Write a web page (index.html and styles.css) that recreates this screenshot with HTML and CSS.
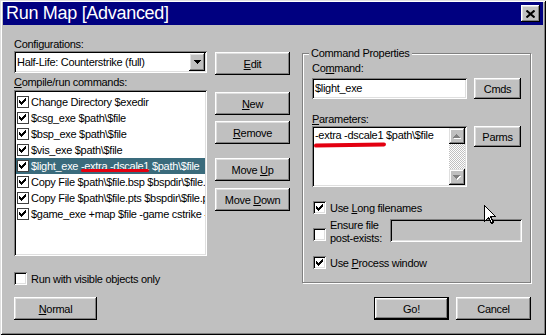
FILE: index.html
```html
<!DOCTYPE html>
<html>
<head>
  <meta charset="utf-8">
  <title>Run Map [Advanced]</title>
  <link rel="stylesheet" href="styles.css">
</head>
<body>
  <div class="window">
    <div class="titlebar">
      <span class="title">Run Map [Advanced]</span>
      <span class="close">
        <svg width="9" height="8" viewBox="0 0 9 8"><path d="M0.5 0.5L8.5 7.5M8.5 0.5L0.5 7.5" stroke="#000" stroke-width="2"/></svg>
      </span>
    </div>

    <div class="main">
      <div class="left">
        <div class="label">Configurations:</div>
        <div class="combo">
          <span class="combo-text">Half-Life: Counterstrike (full)</span>
          <span class="combo-btn">
            <svg width="7" height="4" viewBox="0 0 7 4" shape-rendering="crispEdges"><path d="M0 0H7V1H6V2H5V3H4V4H3V3H2V2H1V1H0Z" fill="#000"/></svg>
          </span>
        </div>
        <div class="label label-list"><u>C</u>ompile/run commands:</div>
        <div class="list">
          <div class="item"><span class="lcheck"><svg width="13" height="13" viewBox="0 0 13 13" shape-rendering="crispEdges"><path d="M3 5H4V6H5V7H6V6H7V5H8V4H9V3H10V6H9V7H8V8H7V9H6V10H5V9H4V8H3Z"/></svg></span><span>Change Directory $exedir</span></div>
          <div class="item"><span class="lcheck"><svg width="13" height="13" viewBox="0 0 13 13" shape-rendering="crispEdges"><path d="M3 5H4V6H5V7H6V6H7V5H8V4H9V3H10V6H9V7H8V8H7V9H6V10H5V9H4V8H3Z"/></svg></span><span>$csg_exe $path\$file</span></div>
          <div class="item"><span class="lcheck"><svg width="13" height="13" viewBox="0 0 13 13" shape-rendering="crispEdges"><path d="M3 5H4V6H5V7H6V6H7V5H8V4H9V3H10V6H9V7H8V8H7V9H6V10H5V9H4V8H3Z"/></svg></span><span>$bsp_exe $path\$file</span></div>
          <div class="item"><span class="lcheck"><svg width="13" height="13" viewBox="0 0 13 13" shape-rendering="crispEdges"><path d="M3 5H4V6H5V7H6V6H7V5H8V4H9V3H10V6H9V7H8V8H7V9H6V10H5V9H4V8H3Z"/></svg></span><span>$vis_exe $path\$file</span></div>
          <div class="item sel"><span class="lcheck"><svg width="13" height="13" viewBox="0 0 13 13" shape-rendering="crispEdges"><path d="M3 5H4V6H5V7H6V6H7V5H8V4H9V3H10V6H9V7H8V8H7V9H6V10H5V9H4V8H3Z"/></svg></span><span>$light_exe <span class="mark">-extra -dscale1</span> $path\$file</span></div>
          <div class="item"><span class="lcheck"><svg width="13" height="13" viewBox="0 0 13 13" shape-rendering="crispEdges"><path d="M3 5H4V6H5V7H6V6H7V5H8V4H9V3H10V6H9V7H8V8H7V9H6V10H5V9H4V8H3Z"/></svg></span><span>Copy File $path\$file.bsp $bspdir\$file.bsp</span></div>
          <div class="item"><span class="lcheck"><svg width="13" height="13" viewBox="0 0 13 13" shape-rendering="crispEdges"><path d="M3 5H4V6H5V7H6V6H7V5H8V4H9V3H10V6H9V7H8V8H7V9H6V10H5V9H4V8H3Z"/></svg></span><span>Copy File $path\$file.pts $bspdir\$file.pts</span></div>
          <div class="item"><span class="lcheck"><svg width="13" height="13" viewBox="0 0 13 13" shape-rendering="crispEdges"><path d="M3 5H4V6H5V7H6V6H7V5H8V4H9V3H10V6H9V7H8V8H7V9H6V10H5V9H4V8H3Z"/></svg></span><span>$game_exe +map $file -game cstrike -dev</span></div>
        </div>
        <div class="check-row visible-only"><span class="check"></span><span>Run with visible objects only</span></div>
      </div>

      <div class="buttons">
        <div class="btn btn-edit"><span><u>E</u>dit</span></div>
        <div class="btn btn-new"><span><u>N</u>ew</span></div>
        <div class="btn btn-remove"><span><u>R</u>emove</span></div>
        <div class="btn btn-up"><span>Move <u>U</u>p</span></div>
        <div class="btn btn-down"><span>Move <u>D</u>own</span></div>
      </div>

      <div class="group">
        <div class="group-title">Command Properties</div>
        <div class="label cmd-label">Co<u>m</u>mand:</div>
        <div class="field-row">
          <div class="input">$light_exe</div>
          <div class="btn btn-small">Cmds</div>
        </div>
        <div class="label params-label"><u>P</u>arameters:</div>
        <div class="field-row params-row">
          <div class="textarea">
            <div class="textarea-text"><span class="mark mark-params">-extra -dscale1</span> $path\$file</div>
            <div class="sb">
              <div class="sb-btn">
                <svg width="8" height="5" viewBox="0 0 8 5" shape-rendering="crispEdges"><path d="M4 1H5V2H6V3H7V4H8V5H1V4H4Z" fill="#fff"/><path d="M3 0H4V1H5V2H6V3H7V4H0V3H1V2H2V1H3Z" fill="#808080"/></svg>
              </div>
              <div class="sb-track"></div>
              <div class="sb-btn">
                <svg width="8" height="5" viewBox="0 0 8 5" shape-rendering="crispEdges"><path d="M1 1H8V2H7V3H6V4H5V5H4V4H3Z" fill="#fff"/><path d="M0 0H7V1H6V2H5V3H4V4H3V3H2V2H1V1H0Z" fill="#808080"/></svg>
              </div>
            </div>
          </div>
          <div class="btn btn-small">Parms</div>
        </div>
        <div class="check-row long-names">
          <span class="check"><svg width="13" height="13" viewBox="0 0 13 13" shape-rendering="crispEdges"><path d="M3 5H4V6H5V7H6V6H7V5H8V4H9V3H10V6H9V7H8V8H7V9H6V10H5V9H4V8H3Z"/></svg></span>
          <span>Use <u>L</u>ong filenames</span>
        </div>
        <div class="ensure-row">
          <span class="check"></span>
          <div class="ensure-text">Ensure file<br>post-exists:</div>
          <div class="disabled-box"></div>
        </div>
        <div class="check-row process">
          <span class="check"><svg width="13" height="13" viewBox="0 0 13 13" shape-rendering="crispEdges"><path d="M3 5H4V6H5V7H6V6H7V5H8V4H9V3H10V6H9V7H8V8H7V9H6V10H5V9H4V8H3Z"/></svg></span>
          <span>Use <u>P</u>rocess window</span>
        </div>
        <svg class="cursor" width="13" height="20" viewBox="0 0 13 20" shape-rendering="crispEdges"><path d="M0.5 0.5V16.5L4.5 12.5L7.5 18.5L9.5 17.5L6.5 11.5H11.5Z" fill="#fff" stroke="#000"/></svg>
      </div>
    </div>

    <div class="footer">
      <div class="btn btn-normal"><span><u>N</u>ormal</span></div>
      <div class="btn btn-go">Go!</div>
      <div class="btn btn-cancel">Cancel</div>
    </div>
  </div>
</body>
</html>
```

FILE: styles.css
```css
body {
  margin: 0;
  font-family: "Liberation Sans", Arial, sans-serif;
  font-size: 11px;
  letter-spacing: -0.3px;
  color: #000;
  background: #c0c0c0;
}
.window {
  width: 546px;
  height: 335px;
  box-sizing: border-box;
  padding: 2px 3px 3px 3px;
  background: #c0c0c0;
  box-shadow: inset 1px 1px #dfdfdf, inset -1px -1px #000, inset 2px 2px #fff, inset -2px -2px #808080;
}
.titlebar {
  height: 23px;
  background: #000080;
  color: #fff;
  display: flex;
  align-items: center;
  justify-content: space-between;
  padding: 0 3px 0 3px;
}
.title {
  font-size: 18px;
  line-height: 23px;
}
.close {
  width: 19px;
  height: 17px;
  box-sizing: border-box;
  background: #c0c0c0;
  display: flex;
  align-items: center;
  justify-content: center;
  box-shadow: inset -1px -1px #000, inset 1px 1px #fff, inset -2px -2px #808080, inset 2px 2px #dfdfdf;
}

/* raised and sunken frames */
.btn {
  box-sizing: border-box;
  height: 23px;
  display: flex;
  align-items: center;
  justify-content: center;
  white-space: nowrap;
  background: #c0c0c0;
  box-shadow: inset -1px -1px #000, inset 1px 1px #fff, inset -2px -2px #808080, inset 2px 2px #dfdfdf;
}
.combo, .list, .input, .textarea, .check, .disabled-box {
  box-sizing: border-box;
  background: #fff;
  box-shadow: inset 1px 1px #808080, inset -1px -1px #fff, inset 2px 2px #000, inset -2px -2px #dfdfdf;
}

.main {
  display: flex;
  align-items: flex-start;
  padding-left: 11px;
}
.left {
  width: 193px;
  padding-top: 12px;
}
.label {
  height: 14px;
  line-height: 14px;
}
.combo {
  height: 22px;
  display: flex;
  align-items: center;
}
.combo-text {
  flex: 1;
  padding-left: 3px;
}
.combo-btn {
  width: 16px;
  height: 18px;
  margin-right: 2px;
  display: flex;
  align-items: center;
  justify-content: center;
  box-shadow: inset -1px -1px #000, inset 1px 1px #fff, inset -2px -2px #808080, inset 2px 2px #dfdfdf;
  background: #c0c0c0;
}
.label-list {
  margin-top: 2px;
}
.list {
  margin-top: 1px;
  height: 166px;
  padding: 4px 2px 0 2px;
  overflow: hidden;
}
.item {
  height: 16px;
  line-height: 16px;
  display: flex;
  align-items: center;
  white-space: nowrap;
  overflow: hidden;
}
.item.sel {
  background: #3a6b7c;
  color: #fff;
}
.lcheck {
  flex: none;
  width: 12px;
  height: 12px;
  margin: 0 2px 0 1px;
  background: #fff;
  border: 1px solid #404040;
  box-sizing: border-box;
  overflow: hidden;
}
.lcheck svg {
  display: block;
  margin: -2px 0 0 -2px;
}
.mark {
  position: relative;
}
.mark::after {
  content: "";
  position: absolute;
  left: 0;
  right: 0;
  bottom: 0;
  height: 3px;
  border-radius: 2px;
  background: #e30010;
}
.mark-params::after {
  left: -1px;
  right: -3px;
  bottom: -6px;
  height: 4px;
  transform: rotate(-1deg);
}
.check-row {
  display: flex;
  align-items: center;
  gap: 4px;
  height: 13px;
  white-space: nowrap;
}
.check {
  flex: none;
  width: 13px;
  height: 13px;
}
.check svg {
  display: block;
}
.visible-only {
  margin-top: 16px;
}

.buttons {
  width: 75px;
  margin-left: 8px;
  padding-top: 27px;
  display: flex;
  flex-direction: column;
}
.btn-new {
  margin-top: 17px;
}
.btn-remove {
  margin-top: 6px;
}
.btn-up {
  margin-top: 14px;
}
.btn-down {
  margin-top: 7px;
}

.group {
  position: relative;
  width: 229px;
  height: 230px;
  margin: 28px 0 0 12px;
  box-sizing: border-box;
  border: 1px solid #808080;
  box-shadow: 1px 1px 0 #fff, inset 1px 1px 0 #fff;
  padding: 0 8px 0 9px;
  display: flex;
  flex-direction: column;
}
.group-title {
  align-self: flex-start;
  margin: -8px 0 0 -3px;
  padding: 0 2px;
  line-height: 14px;
  background: #c0c0c0;
}
.cmd-label {
  margin-top: 1px;
}
.field-row {
  display: flex;
  align-items: flex-start;
  gap: 7px;
  margin-top: 3px;
}
.input {
  width: 155px;
  height: 21px;
  line-height: 21px;
  padding-left: 3px;
}
.btn-small {
  width: 47px;
  height: 21px;
}
.params-label {
  margin-top: 13px;
}
.params-row {
  margin-top: 0;
}
.textarea {
  width: 155px;
  height: 61px;
  padding: 2px;
  display: flex;
}
.textarea-text {
  flex: 1;
  line-height: 14px;
  padding-left: 1px;
  white-space: nowrap;
}
.sb {
  width: 16px;
  display: flex;
  flex-direction: column;
}
.sb-btn {
  height: 16px;
  display: flex;
  align-items: center;
  justify-content: center;
  background: #c0c0c0;
  box-shadow: inset -1px -1px #000, inset 1px 1px #dfdfdf, inset -2px -2px #808080, inset 2px 2px #fff;
}
.sb-track {
  flex: 1;
  background: conic-gradient(#c0c0c0 25%, #fff 0 50%, #c0c0c0 0 75%, #fff 0);
  background-size: 2px 2px;
}
.long-names {
  margin: 14px 0 0 1px;
}
.ensure-row {
  display: flex;
  align-items: flex-start;
  margin: 5px 0 0 1px;
}
.ensure-row .check {
  margin-top: 9px;
}
.ensure-text {
  margin-left: 4px;
  line-height: 13px;
}
.disabled-box {
  width: 132px;
  height: 23px;
  margin-left: auto;
  background: #c0c0c0;
}
.process {
  margin: 11px 0 0 1px;
}
.cursor {
  position: absolute;
  left: 181px;
  top: 151px;
}

.footer {
  display: flex;
  margin-top: 12px;
  padding: 0 12px 0 11px;
}
.btn-normal {
  width: 83px;
}
.btn-go {
  width: 75px;
  margin-left: auto;
  border: 1px solid #000;
}
.btn-cancel {
  width: 75px;
  margin-left: 7px;
}
```
